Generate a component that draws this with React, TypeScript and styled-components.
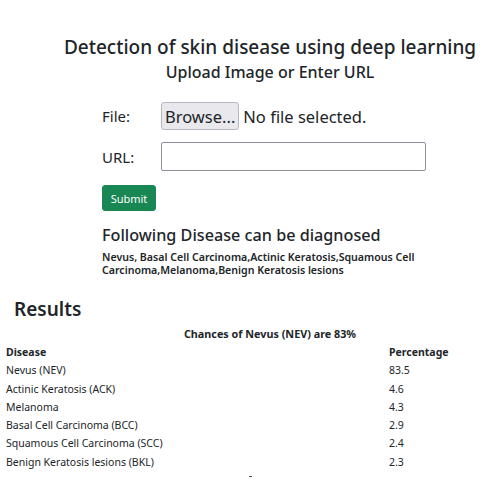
import React from "react";
import styled, { createGlobalStyle } from "styled-components";

const Global = createGlobalStyle`
  html, body { margin: 0; padding: 0; background: #fff; }
  body { font-family: "Noto Sans", "DejaVu Sans", sans-serif; color: #212529; }
`;

const Page = styled.div`
  width: 500px;
  height: 500px;
  overflow: hidden;
  display: flex;
  flex-direction: column;
`;

const Header = styled.header`
  padding: 36px 0 0 40px;
  text-align: center;
`;

const Title = styled.h1`
  margin: 0;
  font-size: 19px;
  font-weight: 500;
  line-height: 22px;
`;

const Subtitle = styled.h2`
  margin: 4px 0 0;
  font-size: 16px;
  font-weight: 500;
  line-height: 20px;
`;

const FormArea = styled.form`
  padding: 20px 0 0 102px;
  display: flex;
  flex-direction: column;
`;

const Row = styled.div`
  display: grid;
  grid-template-columns: 59px auto;
  align-items: center;
  margin-bottom: 12px;
`;

const Label = styled.label`
  font-size: 15px;
`;

const FileBox = styled.div`
  display: flex;
  align-items: center;
  gap: 4px;
  font-size: 16.5px;
`;

const BrowseButton = styled.span`
  display: inline-flex;
  align-items: center;
  height: 26px;
  padding: 0 3px;
  border: 1px solid #b6b6bd;
  border-radius: 3px;
  background: #e9e9ed;
  font-size: 16.5px;
`;

const UrlInput = styled.input`
  box-sizing: border-box;
  width: 265px;
  height: 29px;
  border: 1px solid #8f8f9d;
  border-radius: 2px;
  outline: none;
`;

const SubmitButton = styled.button`
  align-self: flex-start;
  height: 26px;
  width: 54px;
  border: 1px solid #198754;
  border-radius: 3px;
  background: #198754;
  color: #fff;
  font-family: inherit;
  font-size: 11px;
  padding: 0;
  margin-top: 2px;
`;

const InfoTitle = styled.h3`
  margin: 14px 0 0;
  font-size: 16.2px;
  font-weight: 500;
  line-height: 20px;
`;

const InfoText = styled.p`
  margin: 6px 0 0;
  font-size: 10.6px;
  font-weight: 600;
  line-height: 13px;
  width: 330px;
`;

const ResultsTitle = styled.h2`
  margin: 20px 0 0 14px;
  font-size: 19px;
  font-weight: 600;
  line-height: 24px;
`;

const Chances = styled.div`
  margin: 6px 0 0 40px;
  text-align: center;
  font-size: 10.8px;
  font-weight: 700;
  line-height: 14px;
`;

const Table = styled.div`
  margin-top: 2px;
  display: grid;
  grid-template-columns: 383px 1fr;
  font-size: 10.5px;
`;

const Cell = styled.div<{ $head?: boolean }>`
  padding: 0 6px;
  height: 18.3px;
  line-height: 18.3px;
  font-weight: ${(p) => (p.$head ? 700 : 400)};
`;

const Dot = styled.div`
  margin: 5px 0 0 249px;
  width: 3px;
  height: 1px;
  background: #555;
`;

const rows: [string, string][] = [
  ["Nevus (NEV)", "83.5"],
  ["Actinic Keratosis (ACK)", "4.6"],
  ["Melanoma", "4.3"],
  ["Basal Cell Carcinoma (BCC)", "2.9"],
  ["Squamous Cell Carcinoma (SCC)", "2.4"],
  ["Benign Keratosis lesions (BKL)", "2.3"],
];

export default function App() {
  return (
    <Page>
      <Global />
      <Header>
        <Title>Detection of skin disease using deep learning</Title>
        <Subtitle>Upload Image or Enter URL</Subtitle>
      </Header>
      <FormArea onSubmit={(e) => e.preventDefault()}>
        <Row>
          <Label>File:</Label>
          <FileBox>
            <BrowseButton>Browse...</BrowseButton>
            <span>No file selected.</span>
          </FileBox>
        </Row>
        <Row>
          <Label>URL:</Label>
          <UrlInput type="text" />
        </Row>
        <SubmitButton type="submit">Submit</SubmitButton>
        <InfoTitle>Following Disease can be diagnosed</InfoTitle>
        <InfoText>
          Nevus, Basal Cell Carcinoma,Actinic Keratosis,Squamous Cell Carcinoma,Melanoma,Benign Keratosis lesions
        </InfoText>
      </FormArea>
      <ResultsTitle>Results</ResultsTitle>
      <Chances>Chances of Nevus (NEV) are 83%</Chances>
      <Table>
        <Cell $head>Disease</Cell>
        <Cell $head>Percentage</Cell>
        {rows.map(([d, p]) => (
          <React.Fragment key={d}>
            <Cell>{d}</Cell>
            <Cell>{p}</Cell>
          </React.Fragment>
        ))}
      </Table>
      <Dot />
    </Page>
  );
}
